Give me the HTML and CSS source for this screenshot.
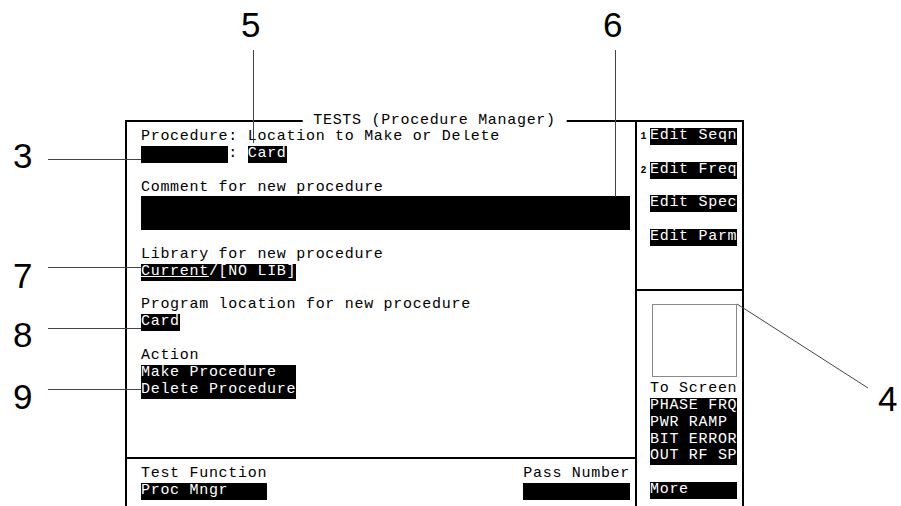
FILE: index.html
```html
<!DOCTYPE html>
<html lang="en">
  <head>
    <meta charset="UTF-8" />
    <meta name="viewport" content="width=device-width, initial-scale=1.0" />
    <title>TESTS (Procedure Manager)</title>
    <link rel="stylesheet" href="styles.css">
  </head>
  <body>
    <div id="page">
      <div id="screen">
        <div id="title">TESTS (Procedure Manager)</div>

        <div id="main">
          <div class="fields">
            <div class="row">Procedure: Location to Make or Delete</div>
            <div class="row"><span class="inv">         </span>: <span class="inv">Card</span></div>
            <div class="row"></div>
            <div class="row">Comment for new procedure</div>
            <div class="bar"></div>
            <div class="row"></div>
            <div class="row">Library for new procedure</div>
            <div class="row"><span class="inv"><u>Current</u>/[NO LIB]</span></div>
            <div class="row"></div>
            <div class="row">Program location for new procedure</div>
            <div class="row"><span class="inv">Card</span></div>
            <div class="row"></div>
            <div class="row">Action</div>
            <div class="row"><span class="inv">Make Procedure  </span></div>
            <div class="row"><span class="inv">Delete Procedure</span></div>
          </div>

          <div class="footer">
            <div>
              <div class="row">Test Function</div>
              <div class="row"><span class="inv">Proc Mngr    </span></div>
            </div>
            <div>
              <div class="row">Pass Number</div>
              <div class="row"><span class="inv">           </span></div>
            </div>
          </div>
        </div>

        <div id="side">
          <div class="keys">
            <div class="row key"><span class="num">1</span><span class="inv">Edit Seqn</span></div>
            <div class="row key"><span class="num">2</span><span class="inv">Edit Freq</span></div>
            <div class="row key"><span class="num"></span><span class="inv">Edit Spec</span></div>
            <div class="row key"><span class="num"></span><span class="inv">Edit Parm</span></div>
          </div>
          <div class="lower">
            <div class="preview"></div>
            <div class="row">To Screen</div>
            <div class="row"><span class="inv">PHASE FRQ</span></div>
            <div class="row"><span class="inv">PWR RAMP </span></div>
            <div class="row"><span class="inv">BIT ERROR</span></div>
            <div class="row"><span class="inv">OUT RF SP</span></div>
            <div class="row"></div>
            <div class="row"><span class="inv">More     </span></div>
          </div>
        </div>
      </div>
    </div>

    <!-- callout numbers -->
    <div id="notes">
      <svg width="901" height="506" viewBox="0 0 901 506">
        <line x1="253.5" y1="50" x2="253.5" y2="143" />
        <line x1="615.5" y1="50" x2="615.5" y2="197" />
        <line x1="48" y1="159.5" x2="141" y2="159.5" />
        <line x1="48" y1="267.5" x2="141" y2="267.5" />
        <line x1="48" y1="328.5" x2="141" y2="328.5" />
        <line x1="48" y1="389.5" x2="141" y2="389.5" />
        <line x1="737" y1="304" x2="868" y2="388" />
      </svg>
      <div class="digit n5">5</div>
      <div class="digit n6">6</div>
      <div class="digit n3">3</div>
      <div class="digit n7">7</div>
      <div class="digit n8">8</div>
      <div class="digit n9">9</div>
      <div class="digit n4">4</div>
    </div>
  </body>
</html>
```

FILE: styles.css
```css
body {
  margin: 0;
  height: 506px;
  overflow: hidden;
  background: #fff;
  color: #000;
  font-family: "Liberation Mono", "DejaVu Sans Mono", monospace;
  font-size: 15px;
  letter-spacing: 0.7px;
}

#page {
  padding: 120px 0 0 125px;
}

#screen {
  position: relative;
  display: flex;
  width: 619px;
  height: 386px;
  box-sizing: border-box;
  border: 2px solid #000;
  border-bottom: none;
}

#title {
  position: absolute;
  top: -9px;
  left: 50%;
  transform: translateX(-50%);
  padding: 0 11px;
  background: #fff;
  line-height: 16.85px;
  white-space: pre;
}

.row {
  height: 16.85px;
  line-height: 16.85px;
  white-space: pre;
}

.inv {
  display: inline-block;
  background: #000;
  color: #fff;
}

#main {
  width: 508px;
  display: flex;
  flex-direction: column;
}

.fields {
  height: 335px;
  box-sizing: border-box;
  padding: 7px 0 0 14px;
}

.bar {
  width: 489px;
  height: 33.7px;
  background: #000;
}

.footer {
  display: flex;
  justify-content: space-between;
  border-top: 2px solid #000;
  padding: 7px 5px 0 14px;
}

#side {
  width: 105px;
  border-left: 2px solid #000;
}

.keys {
  height: 169px;
  box-sizing: border-box;
  padding-top: 6px;
  border-bottom: 2px solid #000;
}

.key {
  margin-bottom: 16.85px;
}

.num {
  display: inline-block;
  width: 13px;
  font-size: 10px;
  font-weight: bold;
  letter-spacing: 0;
  text-align: center;
}

.lower {
  padding: 13px 0 0 13px;
}

.preview {
  width: 85px;
  height: 73px;
  box-sizing: border-box;
  margin: 0 0 4px 2px;
  border: 1px solid #888;
}

#notes {
  position: absolute;
  top: 0;
  left: 0;
  width: 901px;
  height: 506px;
  pointer-events: none;
}

#notes svg {
  position: absolute;
  top: 0;
  left: 0;
}

#notes line {
  stroke: #444;
  stroke-width: 1;
}

.digit {
  position: absolute;
  font-family: "Liberation Sans", Arial, sans-serif;
  font-size: 35px;
  line-height: 35px;
  letter-spacing: 0;
}
.n5 { top: 7px; left: 241px; }
.n6 { top: 7px; left: 603px; }
.n3 { top: 138px; left: 13px; }
.n7 { top: 258px; left: 13px; }
.n8 { top: 317px; left: 13px; }
.n9 { top: 379px; left: 13px; }
.n4 { top: 381px; left: 878px; }
```
